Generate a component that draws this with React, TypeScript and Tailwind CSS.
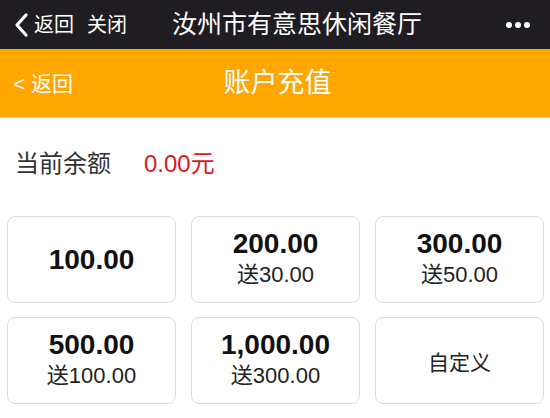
import React from "react";

const cjk = { fontFamily: '"Liberation Sans", "Noto Sans CJK SC", sans-serif' };

const items = [
  { amt: "100.00", gift: "" },
  { amt: "200.00", gift: "送30.00" },
  { amt: "300.00", gift: "送50.00" },
  { amt: "500.00", gift: "送100.00" },
  { amt: "1,000.00", gift: "送300.00" },
];

export default function App() {
  return (
    <div className="w-[550px] h-[418px] bg-white overflow-hidden" style={cjk}>
      <div className="h-[49px] bg-[#1f1d22] flex items-center text-white relative">
        <svg width="16" height="26" viewBox="0 0 16 26" className="ml-[13px]">
          <path d="M13 3 L4 13 L13 23" stroke="white" strokeWidth="3.2" fill="none" strokeLinecap="round" strokeLinejoin="round" />
        </svg>
        <span className="text-[20px] ml-[5px] leading-none">返回</span>
        <span className="text-[20px] ml-[13px] leading-none">关闭</span>
        <span className="text-[25px] ml-[45px] leading-none">汝州市有意思休闲餐厅</span>
        <div className="ml-auto mr-[20px] flex gap-[3px]">
          <span className="w-[6px] h-[6px] rounded-full bg-white" />
          <span className="w-[6px] h-[6px] rounded-full bg-white" />
          <span className="w-[6px] h-[6px] rounded-full bg-white" />
        </div>
      </div>
      <div className="h-[69px] bg-[#ffa600] flex items-center relative border-b border-[#d8d4cc]">
        <span className="text-[21px] text-white ml-[13px] leading-none">&lt; 返回</span>
        <span className="absolute left-[5px] right-0 text-center text-[27px] text-white leading-none pointer-events-none">账户充值</span>
      </div>
      <div className="h-[98px] flex items-start pt-[34px] pl-[15px]">
        <span className="text-[24px] text-[#333] leading-[24px]">当前余额</span>
        <span className="text-[24px] text-[#e0161d] ml-[33px] leading-[24px]">0.00元</span>
      </div>
      <div className="grid grid-cols-3 gap-x-[15px] gap-y-[14px] pl-[7px] pr-[6px]">
        {items.map((it) => (
          <div key={it.amt} className="h-[87px] rounded-[8px] border border-[#dcdcdc] flex flex-col items-center justify-center">
            <span className="text-[28px] font-bold text-[#111] leading-[30px]">{it.amt}</span>
            {it.gift && <span className="text-[22px] text-[#222] leading-[32px]">{it.gift}</span>}
          </div>
        ))}
        <div className="h-[87px] rounded-[8px] border border-[#dcdcdc] flex items-center justify-center pt-[4px]">
          <span className="text-[21px] text-[#222]">自定义</span>
        </div>
      </div>
    </div>
  );
}
